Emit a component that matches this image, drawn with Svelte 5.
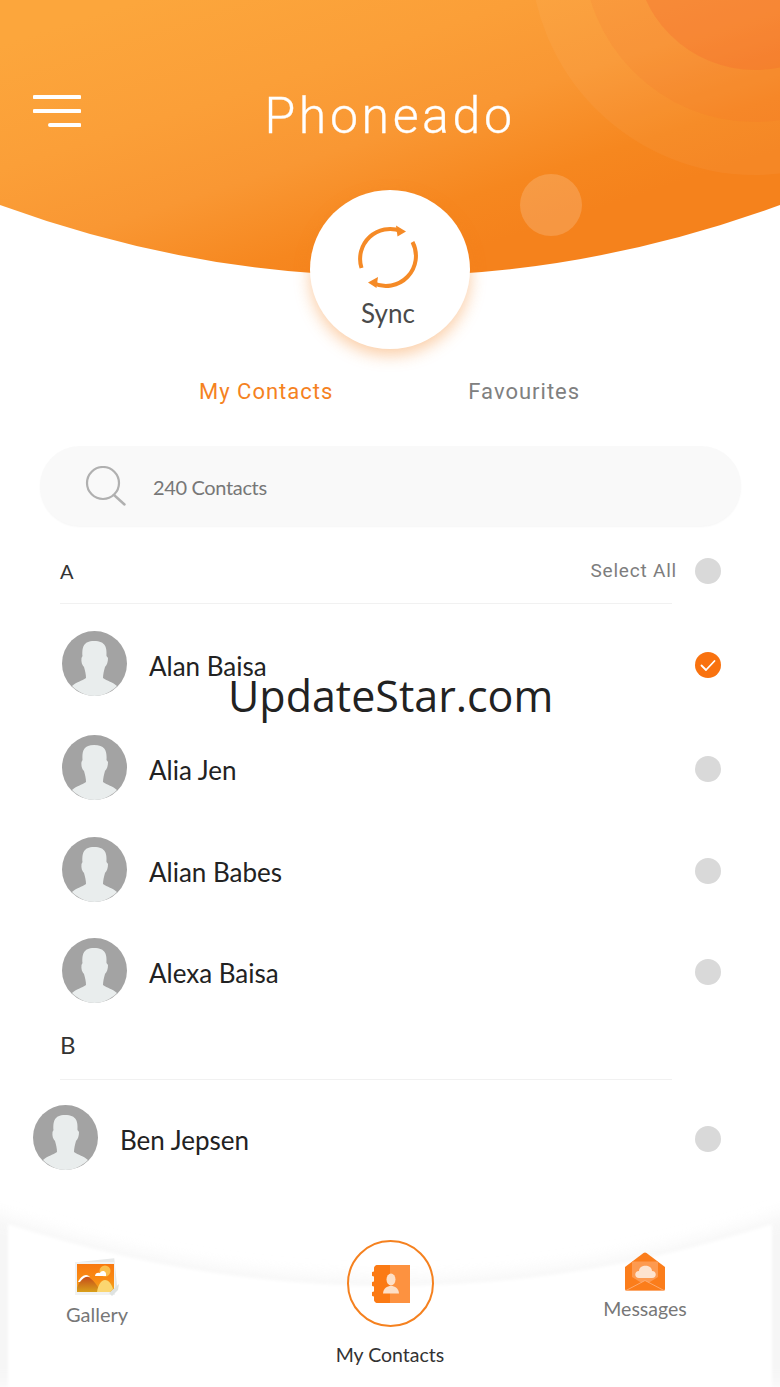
<script>
    const groupA = [
        { name: 'Alan Baisa', gap: 27, checked: true },
        { name: 'Alia Jen', gap: 39 },
        { name: 'Alian Babes', gap: 37 },
        { name: 'Alexa Baisa', gap: 36 }
    ];
</script>

<div class="page">
    <section class="hero">
        <svg class="hero-bg" viewBox="0 0 780 280" width="780" height="280" aria-hidden="true">
            <defs>
                <linearGradient id="heroGrad" gradientUnits="userSpaceOnUse" x1="230" y1="-30" x2="335" y2="294">
                    <stop offset="0" stop-color="#fca63c" />
                    <stop offset="0.35" stop-color="#fb9f38" />
                    <stop offset="0.6" stop-color="#f99733" />
                    <stop offset="0.85" stop-color="#f6871f" />
                    <stop offset="1" stop-color="#f5821c" />
                </linearGradient>
                <clipPath id="heroClip">
                    <path d="M0 205 Q390 347 780 205 V0 H0 Z" />
                </clipPath>
            </defs>
            <g clip-path="url(#heroClip)">
                <rect width="780" height="280" fill="url(#heroGrad)" />
                <circle cx="755" cy="-50" r="225" fill="#fff" opacity="0.045" />
                <circle cx="755" cy="-50" r="172" fill="#f4682c" opacity="0.11" />
                <circle cx="755" cy="-50" r="120" fill="#f4622c" opacity="0.27" />
                <circle cx="551" cy="205" r="31" fill="#fff" opacity="0.17" />
            </g>
        </svg>

        <div class="topbar">
            <svg class="menu" width="48" height="32" viewBox="0 0 48 32" aria-hidden="true">
                <path d="M1.500 2 H46.500 M1.500 16 H46.500 M17 30 H46.500" stroke="#fff" stroke-width="4" stroke-linecap="round" fill="none" />
            </svg>
            <h1>Phoneado</h1>
        </div>

        <button class="sync">
            <svg width="66" height="66" viewBox="0 0 66 66" aria-hidden="true">
                <path d="M7.500 44 A30 30 0 0 1 47 7" fill="none" stroke="#f58a26" stroke-width="4" />
                <path d="M58.500 18 A30 30 0 0 1 19 59" fill="none" stroke="#f58a26" stroke-width="4" />
                <path d="M42 1.500 L52 7.500 L43.500 12.500 Z" fill="#f58a26" />
                <path d="M24 53 L14 58.500 L22.500 64 Z" fill="#f58a26" />
            </svg>
            <span>Sync</span>
        </button>
    </section>

    <nav class="tabs">
        <span class="tab active">My Contacts</span>
        <span class="tab">Favourites</span>
    </nav>

    <div class="search">
        <svg width="42" height="40" viewBox="0 0 42 40" aria-hidden="true">
            <circle cx="18" cy="17" r="16" fill="none" stroke="#b0b0b0" stroke-width="2.200" />
            <path d="M29 29 L39.500 38.500" stroke="#b0b0b0" stroke-width="2.400" stroke-linecap="round" />
        </svg>
        <span>240 Contacts</span>
    </div>

    <div class="group-head first">
        <span class="letter">A</span>
        <span class="select-all">Select All</span>
        <span class="radio"></span>
    </div>
    <div class="divider"></div>

    {#each groupA as c}
        <div class="row" style="margin-top: {c.gap}px">
            <svg class="avatar" width="65" height="65" viewBox="0 0 65 65" aria-hidden="true">
                <circle cx="32.500" cy="32.500" r="32.500" fill="#a3a3a3" />
                <path d="M10 55 C14 51 20 50 24 47 C24 43 23 40 22 36 C20 34 19 31 19.500 27 L20.500 25 C20 17 21 10 32 10 C44 10 45 17 44.500 25 L46 27 C46 31 45 34 43 36 C42 40 41 43 41 47 C45 50 51 51 55 55 C49 61 41 65 32.500 65 C24 65 16 61 10 55 Z" fill="#e9eded" />
            </svg>
            <span class="name">{c.name}</span>
            {#if c.checked}
                <span class="radio on">
                    <svg width="26" height="26" viewBox="0 0 26 26" aria-hidden="true">
                        <path d="M6.500 13.500 L11 18 L19.500 9" fill="none" stroke="#fff" stroke-width="1.800" stroke-linecap="round" stroke-linejoin="round" />
                    </svg>
                </span>
            {:else}
                <span class="radio"></span>
            {/if}
        </div>
    {/each}

    <div class="group-head second">
        <span class="letter big">B</span>
    </div>
    <div class="divider"></div>

    <div class="row ben">
        <svg class="avatar" width="65" height="65" viewBox="0 0 65 65" aria-hidden="true">
            <circle cx="32.500" cy="32.500" r="32.500" fill="#a3a3a3" />
            <path d="M10 55 C14 51 20 50 24 47 C24 43 23 40 22 36 C20 34 19 31 19.500 27 L20.500 25 C20 17 21 10 32 10 C44 10 45 17 44.500 25 L46 27 C46 31 45 34 43 36 C42 40 41 43 41 47 C45 50 51 51 55 55 C49 61 41 65 32.500 65 C24 65 16 61 10 55 Z" fill="#e9eded" />
        </svg>
        <span class="name">Ben Jepsen</span>
        <span class="radio"></span>
    </div>

    <footer class="bottom">
        <svg class="bottom-bg" width="780" height="187" viewBox="0 0 780 187" aria-hidden="true">
            <defs>
                <filter id="softShadow" x="-10%" y="-30%" width="120%" height="160%">
                    <feGaussianBlur stdDeviation="8" />
                </filter>
                <filter id="softEdge" x="-5%" y="-5%" width="110%" height="110%">
                    <feGaussianBlur stdDeviation="1.500" />
                </filter>
            </defs>
            <path d="M-20 8 Q390 150 800 8 V187 H-20 Z" fill="#f1f1f1" filter="url(#softShadow)" opacity="0.6" />
            <path d="M8 24 Q390 148 772 24 V200 H8 Z" fill="#fff" filter="url(#softEdge)" />
        </svg>

        <div class="item gallery">
            <svg width="46" height="40" viewBox="0 0 46 40" aria-hidden="true">
                <defs>
                    <linearGradient id="galGrad" x1="0" y1="0" x2="0" y2="1">
                        <stop offset="0" stop-color="#f8780f" />
                        <stop offset="0.6" stop-color="#f98d14" />
                        <stop offset="1" stop-color="#eeaa1e" />
                    </linearGradient>
                    <linearGradient id="galHill" x1="0" y1="0" x2="0" y2="1">
                        <stop offset="0" stop-color="#c4481a" />
                        <stop offset="1" stop-color="#d9a01a" />
                    </linearGradient>
                </defs>
                <rect x="6" y="2" width="36" height="32" fill="#e6e8e8" transform="rotate(-6 24 18)" />
                <rect x="1" y="4" width="40" height="33" fill="#f1f2f2" />
                <rect x="3" y="6" width="37" height="28" fill="url(#galGrad)" />
                <path d="M3 30 C6 23 8 18 11 18 C16 18 23 26 27 34 H3 Z" fill="url(#galHill)" />
                <path d="M4 24 C6 20 9 17 12 17 C14 17 15 18 16 19 C13 18 9 19 6 24 Z" fill="#fff" />
                <circle cx="31" cy="13" r="5.500" fill="#fbbf4c" />
                <path d="M21 18 C21 15 24 14 26 15 C27 12 33 12 32 18 Z" fill="#fff" />
                <path d="M23 34 C24 27 27 22 31 22 C35 22 38 27 39 31 L36 34 Z" fill="#fbd670" />
                <path d="M35 35 L45 26 L44 32 L38 38 Z" fill="#dfe3e1" />
            </svg>
            <span>Gallery</span>
        </div>

        <div class="item contacts">
            <div class="ring">
                <svg width="38" height="38" viewBox="0 0 38 38" aria-hidden="true">
                    <path d="M6 0 H38 V38 H6 C3 38 2 36 2 34 V4 C2 2 3 0 6 0 Z" fill="#fd9240" />
                    <path d="M6 0 H18 V38 H6 C3 38 2 36 2 34 V4 C2 2 3 0 6 0 Z" fill="#fb7a14" />
                    <circle cx="2" cy="9" r="2.500" fill="#fb7a14" />
                    <circle cx="2" cy="19" r="2.500" fill="#fb7a14" />
                    <circle cx="2" cy="29" r="2.500" fill="#fb7a14" />
                    <ellipse cx="19" cy="14.500" rx="4.500" ry="6" fill="#fde0c8" />
                    <path d="M11 28.500 C11.500 23 15 21 19 21 C23 21 26.500 23 27 28.500 Z" fill="#fde0c8" />
                </svg>
            </div>
            <span>My Contacts</span>
        </div>

        <div class="item messages">
            <svg width="42" height="40" viewBox="0 0 42 40" aria-hidden="true">
                <path d="M19.500 1 Q21 0 22.500 1 L41 15 V37 Q41 39 39 39 H3 Q1 39 1 37 V15 Z" fill="#fb7d1b" />
                <path d="M8 9.500 H34 V25 L21 33 L8 25 Z" fill="#fd9a50" />
                <path d="M15 26 C10 26 10 19 15 19 C15 12 28 12 28 19 C33 19 33 26 28 26 Z" fill="#fde3cf" />
                <path d="M2 38.500 L21 28.500 L40 38.500 Z" fill="#fb7d1b" stroke="#fdb583" stroke-width="0.800" />
            </svg>
            <span>Messages</span>
        </div>
    </footer>

    <div class="watermark">UpdateStar.com</div>
</div>

<style>
    :global(body) { background: #fff; }

    .page {
        position: relative;
        width: 780px;
        height: 1387px;
        overflow: hidden;
        background: #fff;
        font-family: "Lato", "Liberation Sans", sans-serif;
    }

    .hero { position: relative; height: 349px; }
    .hero-bg { position: absolute; top: 0; left: 0; }

    .topbar {
        position: relative;
        height: 60px;
        padding-top: 86px;
        display: flex;
        align-items: center;
        justify-content: center;
    }
    .menu { position: absolute; left: 33px; top: 95px; }
    h1 {
        margin: 0;
        font-family: "Roboto", "Liberation Sans", sans-serif;
        font-weight: 300;
        font-size: 50px;
        line-height: 60px;
        letter-spacing: 3.600px;
        color: #fff;
        -webkit-text-stroke: 0.3px #fff;
    }

    .sync {
        position: relative;
        display: flex;
        flex-direction: column;
        align-items: center;
        width: 160px;
        height: 159px;
        margin: 44px auto 0;
        padding: 34px 0 0;
        border: none;
        border-radius: 50%;
        background: #fff;
        box-shadow: 0 6px 16px rgba(245, 130, 31, 0.4);
        font-family: inherit;
    }
    .sync svg { margin-left: -6px; }
    .sync span {
        margin-top: 8px;
        margin-left: -4px;
        font-size: 26px;
        line-height: 30px;
        color: #4a4a4a;
    }

    .tabs {
        display: flex;
        gap: 135px;
        margin-top: 30px;
        padding-left: 199px;
    }
    .tab {
        font-family: "Roboto", "Liberation Sans", sans-serif;
        font-size: 22px;
        line-height: 26px;
        letter-spacing: 1px;
        color: #808080;
    }
    .tab.active { color: #f5821f; }

    .search {
        display: flex;
        align-items: center;
        box-sizing: border-box;
        width: 701px;
        height: 80px;
        margin: 41px 0 0 40px;
        padding-left: 45px;
        border-radius: 40px;
        background: #f9f9f9;
        box-shadow: 0 1px 2px rgba(0, 0, 0, 0.04);
    }
    .search span {
        margin: 2px 0 0 26px;
        font-size: 20px;
        letter-spacing: -0.35px;
        color: #777;
    }

    .group-head {
        display: flex;
        align-items: center;
        padding: 0 59px 0 60px;
    }
    .group-head.first { height: 26px; margin-top: 32px; }
    .group-head.second { height: 30px; margin-top: 26px; }
    .letter { font-size: 20px; color: #333; }
    .letter.big { font-size: 24px; }
    .select-all {
        margin-left: auto;
        margin-right: 18px;
        margin-bottom: 2px;
        font-family: "Roboto", "Liberation Sans", sans-serif;
        font-size: 19px;
        letter-spacing: 0.8px;
        color: #7d7d7d;
    }

    .divider {
        width: 612px;
        height: 1px;
        margin-left: 60px;
        background: #f1f1f1;
    }
    .group-head.first + .divider { margin-top: 19px; }
    .group-head.second + .divider { margin-top: 20px; }

    .row {
        display: flex;
        align-items: center;
        height: 65px;
        padding: 0 59px 0 62px;
    }
    .row.ben { margin-top: 25px; padding-left: 33px; }
    .avatar { flex-shrink: 0; }
    .name {
        margin: 5px 0 0 22px;
        font-size: 26px;
        color: #222;
    }

    .radio {
        flex-shrink: 0;
        width: 26px;
        height: 26px;
        border-radius: 50%;
        background: #d9d9d9;
    }
    .row .radio { margin: 3px 0 0 auto; }
    .radio.on { background: #f9720f; }
    .radio.on svg { display: block; }

    .bottom {
        position: absolute;
        left: 0;
        right: 0;
        bottom: 0;
        height: 187px;
        display: grid;
        grid-template-columns: 194px 392px 118px;
    }
    .bottom-bg { position: absolute; top: 0; left: 0; }
    .item {
        position: relative;
        display: flex;
        flex-direction: column;
        align-items: center;
        font-size: 19.500px;
        color: #777;
    }
    .gallery { padding-top: 58px; font-size: 20px; }
    .gallery span { margin-top: 4px; }
    .messages { padding-top: 52px; }
    .messages span { margin-top: 5px; }
    .contacts { padding-top: 40px; color: #333; }
    .contacts span { margin-top: 16px; }
    .contacts svg { margin-left: 2px; }
    .ring {
        display: flex;
        align-items: center;
        justify-content: center;
        box-sizing: border-box;
        width: 87px;
        height: 87px;
        border: 2px solid #f5811f;
        border-radius: 50%;
    }

    .watermark {
        position: absolute;
        left: 228px;
        top: 667px;
        font-family: "Open Sans", "Liberation Sans", sans-serif;
        font-size: 43px;
        line-height: 58px;
        color: #222;
        pointer-events: none;
    }
</style>
